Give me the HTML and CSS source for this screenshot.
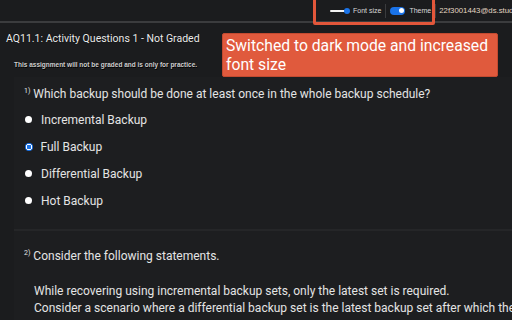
FILE: index.html
```html
<!DOCTYPE html>
<html>
<head>
<meta charset="utf-8">
<link rel="stylesheet" href="styles.css">
</head>
<body>
<div class="topbar">
  <div class="controls">
    <div class="ctl">
      <span class="slider"><span class="knob"></span></span>
      <span class="lbl">Font size</span>
    </div>
    <span class="sep"></span>
    <div class="ctl">
      <span class="toggle"><span class="tknob"></span></span>
      <span class="lbl">Theme</span>
    </div>
    <span class="sep"></span>
  </div>
  <span class="email">22f3001443@ds.study.iitm.ac.in</span>
  <div class="hl-box"></div>
</div>
<div class="header">
  <div class="title">AQ11.1: Activity Questions 1 - Not Graded</div>
  <div class="note">This assignment will not be graded and is only for practice.</div>
  <div class="callout">Switched to dark mode and increased font size</div>
</div>
<div class="panel">
  <div class="q q1">
    <div class="qtext"><sup>1)</sup> Which backup should be done at least once in the whole backup schedule?</div>
    <ul class="opts">
      <li class="opt"><span class="radio"></span>Incremental Backup</li>
      <li class="opt"><span class="radio on"></span>Full Backup</li>
      <li class="opt"><span class="radio"></span>Differential Backup</li>
      <li class="opt"><span class="radio"></span>Hot Backup</li>
    </ul>
  </div>
  <div class="q q2">
    <div class="qtext"><sup>2)</sup> Consider the following statements.</div>
    <div class="stmts">
      <p>While recovering using incremental backup sets, only the latest set is required.</p>
      <p>Consider a scenario where a differential backup set is the latest backup set after which the system failed.</p>
    </div>
  </div>
</div>
</body>
</html>
```
FILE: styles.css
```css
html, body {
  margin: 0;
  padding: 0;
  background: #1b1c1e;
  overflow: hidden;
  width: 512px;
  height: 320px;
}
body {
  font-family: Roboto, "Liberation Sans", sans-serif;
  color: #e6e6e6;
}
.topbar {
  position: relative;
  height: 21px;
  border-bottom: 2px solid #3b3c3e;
  display: flex;
  align-items: center;
  padding-left: 330px;
  white-space: nowrap;
}
.controls {
  display: flex;
  align-items: center;
  gap: 4px;
  flex: none;
}
.ctl {
  display: flex;
  align-items: center;
  gap: 3px;
}
.lbl {
  font-family: "Liberation Sans", Arial, sans-serif;
  font-size: 7px;
  color: #d8d8d8;
}
.slider {
  position: relative;
  width: 17px;
  height: 2px;
  background: #f2f2f2;
  border-radius: 1px;
  margin-right: 3px;
}
.knob {
  position: absolute;
  right: -3px;
  top: -2px;
  width: 6px;
  height: 6px;
  border-radius: 50%;
  background: #1a73e8;
}
.toggle {
  position: relative;
  width: 15px;
  height: 8px;
  border-radius: 4px;
  background: #1a73e8;
  margin-right: 1px;
}
.tknob {
  position: absolute;
  right: 1.5px;
  top: 1.5px;
  width: 5px;
  height: 5px;
  border-radius: 50%;
  background: #fff;
}
.sep {
  width: 1px;
  height: 14px;
  background: #3a3b3d;
}
.email {
  font-family: "Liberation Sans", Arial, sans-serif;
  font-size: 7.8px;
  color: #e2d6c2;
  margin-left: 3px;
  flex: none;
}
.hl-box {
  position: absolute;
  left: 313px;
  top: -3px;
  width: 116px;
  height: 22px;
  border: 3px solid #e2573b;
  border-radius: 2px;
}
.header {
  position: relative;
  padding: 9px 6px 0;
  height: 45px;
}
.title {
  font-size: 10.5px;
  color: #ececec;
  line-height: 14px;
  text-shadow: 0 0 1px #000;
}
.note {
  margin: 15px 0 0 8px;
  font-family: "Liberation Sans", Arial, sans-serif;
  font-size: 6.5px;
  line-height: 8px;
  font-weight: bold;
  color: #cfcfcf;
  text-shadow: 0.5px 0.5px 0.5px #000;
}
.callout {
  position: absolute;
  left: 222px;
  top: 10px;
  width: 268px;
  height: 38px;
  padding: 2px 3px;
  background: #e05a3d;
  border: 1px solid #c24a30;
  border-radius: 2px;
  color: #fff;
  font-size: 15.7px;
  line-height: 19px;
}
.panel {
  margin-left: 14px;
  background: #1d1e20;
  height: 245px;
}
.q1 {
  padding: 9px 0 0 10px;
  height: 143px;
  border-bottom: 2px solid #252628;
}
.qtext {
  font-size: 12px;
  color: #e4e4e4;
  line-height: 16px;
}
.qtext sup {
  font-size: 7px;
  vertical-align: 5px;
  line-height: 0;
}
.opts {
  list-style: none;
  margin: 4px 0 0;
  padding: 0;
}
.opt {
  display: flex;
  align-items: center;
  height: 27px;
  font-size: 12px;
  color: #e4e4e4;
}
.radio {
  width: 7px;
  height: 7px;
  border-radius: 50%;
  background: #fff;
  margin: 0 9px 0 1px;
}
.radio.on {
  width: 8px;
  height: 8px;
  margin: 0 8px 0 0.5px;
  background: radial-gradient(circle, #1a73e8 0 2.1px, #fff 2.4px 2.9px, #1a73e8 3.2px);
}
.q2 {
  padding: 17px 0 0 10px;
}
.stmts {
  margin: 19px 0 0 10px;
  font-size: 12px;
  color: #e4e4e4;
  white-space: nowrap;
}
.stmts p {
  margin: 0;
  line-height: 17px;
}
```
